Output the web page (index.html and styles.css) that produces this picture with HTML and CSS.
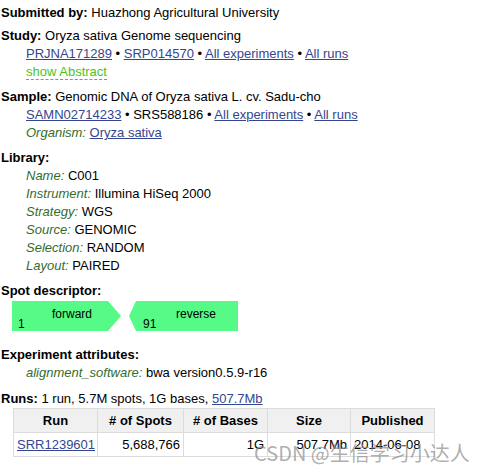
FILE: index.html
```html
<!DOCTYPE html>
<html>
<head>
<meta charset="utf-8">
<link rel="stylesheet" href="styles.css">
</head>
<body>
<div class="page">
  <div class="block first"><b>Submitted by:</b> Huazhong Agricultural University</div>

  <div class="block">
    <div><b>Study:</b> Oryza sativa Genome sequencing</div>
    <div class="indent">
      <div><a href="#">PRJNA171289</a> &bull; <a href="#">SRP014570</a> &bull; <a href="#">All experiments</a> &bull; <a href="#">All runs</a></div>
      <div><span class="toggle">show Abstract</span></div>
    </div>
  </div>

  <div class="block">
    <div><b>Sample:</b> Genomic DNA of Oryza sativa L. cv. Sadu-cho</div>
    <div class="indent">
      <div><a href="#">SAMN02714233</a> &bull; SRS588186 &bull; <a href="#">All experiments</a> &bull; <a href="#">All runs</a></div>
      <div><span class="lbl">Organism:</span> <a href="#">Oryza sativa</a></div>
    </div>
  </div>

  <div class="block">
    <div><b>Library:</b></div>
    <div class="indent">
      <div><span class="lbl">Name:</span> C001</div>
      <div><span class="lbl">Instrument:</span> Illumina HiSeq 2000</div>
      <div><span class="lbl">Strategy:</span> WGS</div>
      <div><span class="lbl">Source:</span> GENOMIC</div>
      <div><span class="lbl">Selection:</span> RANDOM</div>
      <div><span class="lbl">Layout:</span> PAIRED</div>
    </div>
  </div>

  <div class="block spot">
    <div><b>Spot descriptor:</b></div>
    <div class="arrows">
      <div class="arrow fwd">
        <span class="alabel">forward</span>
        <span class="anum">1</span>
      </div>
      <div class="arrow rev">
        <span class="alabel">reverse</span>
        <span class="anum">91</span>
      </div>
    </div>
  </div>

  <div class="block attrs">
    <div><b>Experiment attributes:</b></div>
    <div class="indent">
      <div><span class="lbl">alignment_software:</span> bwa version0.5.9-r16</div>
    </div>
  </div>

  <div class="block runs">
    <div><b>Runs:</b> 1 run, 5.7M spots, 1G bases, <a href="#">507.7Mb</a></div>
    <table class="runtable">
      <colgroup>
        <col class="c1"><col class="c2"><col class="c3"><col class="c4"><col class="c5">
      </colgroup>
      <thead>
        <tr><th>Run</th><th># of Spots</th><th># of Bases</th><th>Size</th><th>Published</th></tr>
      </thead>
      <tbody>
        <tr><td><a href="#">SRR1239601</a></td><td class="num">5,688,766</td><td class="num">1G</td><td class="num">507.7Mb</td><td>2014-06-08</td></tr>
      </tbody>
    </table>
  </div>

  <div class="watermark">CSDN @生信学习小达人</div>
</div>
</body>
</html>
```

FILE: styles.css
```css
html, body {
  margin: 0;
  padding: 0;
  background: #ffffff;
}
body {
  font-family: "Liberation Sans", Arial, sans-serif;
  font-size: 13px;
  line-height: 18px;
  color: #000000;
}
.page {
  position: relative;
  padding: 4px 0 0 1px;
  width: 480px;
  height: 469px;
}
.block {
  margin-top: 7px;
}
.block.first {
  margin-top: 0;
}
.block:nth-child(2) {
  margin-top: 5px;
}
.indent {
  padding-left: 25px;
}
a {
  color: #34468f;
  text-decoration: underline;
}
.toggle {
  color: #4cc41c;
  border-bottom: 1px dashed #4cc41c;
}
.lbl {
  font-style: italic;
  color: #356b2c;
}
.arrows {
  display: flex;
  gap: 8px;
  margin: 1px 0 0 11px;
}
.arrow {
  width: 109px;
  height: 30px;
  background: #55fb86;
  box-sizing: border-box;
  padding-top: 8px;
  display: flex;
  flex-direction: column;
  font-size: 12px;
  line-height: 10px;
}
.fwd {
  clip-path: polygon(0 0, 96px 0, 109px 50%, 96px 100%, 0 100%);
}
.rev {
  clip-path: polygon(7px 0, 109px 0, 109px 100%, 7px 100%, 0 50%);
}
.fwd .alabel { padding-left: 40px; }
.fwd .anum { padding-left: 6px; }
.rev .alabel { padding-left: 47px; }
.rev .anum { padding-left: 14px; }
.attrs {
  margin-top: 15px;
}
.runs {
  margin-top: 8px;
}
.runtable {
  border-collapse: collapse;
  table-layout: fixed;
  width: 421px;
  margin-left: 12px;
}
.c1 { width: 84px; }
.c2 { width: 86px; }
.c3 { width: 84px; }
.c4 { width: 83px; }
.c5 { width: 84px; }
.runtable th, .runtable td {
  border: 1px solid #dcdcdc;
  height: 23px;
  padding: 0 3px;
  white-space: nowrap;
  vertical-align: middle;
}
.runtable th {
  background: #f0f0f0;
  font-weight: bold;
  text-align: center;
}
.runtable td {
  text-align: left;
}
.runtable td.num {
  text-align: right;
}
.watermark {
  position: absolute;
  left: 254px;
  top: 441px;
  font-family: "Noto Sans CJK SC", sans-serif;
  font-size: 20px;
  line-height: 24px;
  letter-spacing: 0;
  color: rgba(140, 140, 140, 0.7);
  white-space: nowrap;
}
```
